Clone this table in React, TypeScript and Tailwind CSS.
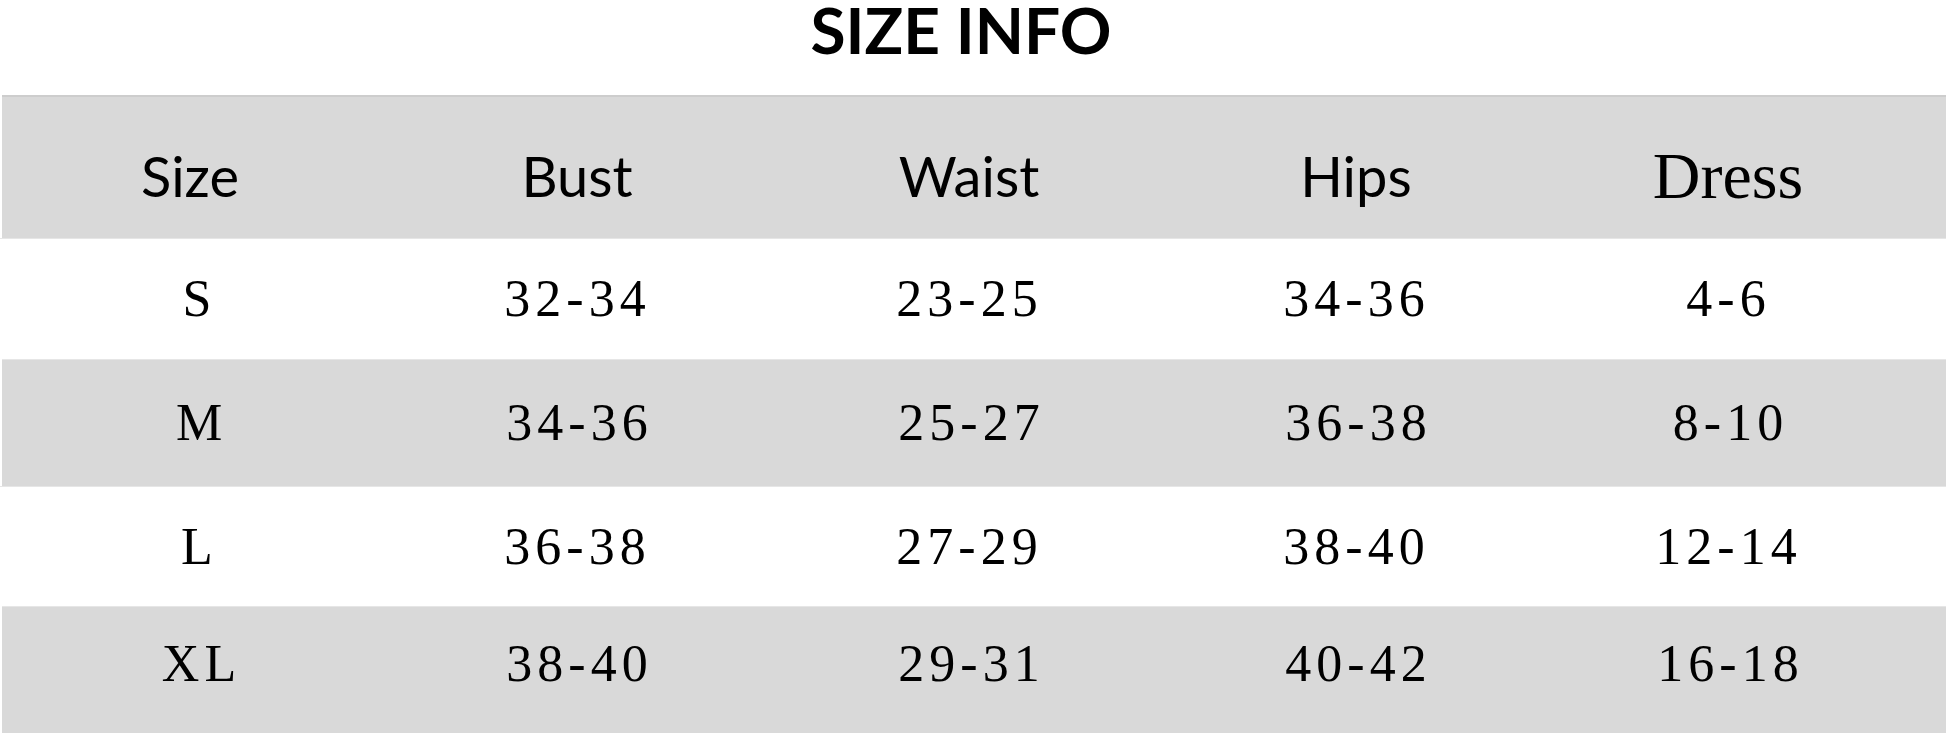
const COLS = "grid grid-cols-[394px_362px_422px_352px_392px]";

const HEADERS = ["Size", "Bust", "Waist", "Hips", "Dress"];

const ROWS: { cells: string[]; shaded: boolean; height: string }[] = [
  { cells: ["S", "32-34", "23-25", "34-36", "4-6"], shaded: false, height: "h-[121px]" },
  { cells: ["M", "34-36", "25-27", "36-38", "8-10"], shaded: true, height: "h-[127px]" },
  { cells: ["L", "36-38", "27-29", "38-40", "12-14"], shaded: false, height: "h-[120px]" },
  { cells: ["XL", "38-40", "29-31", "40-42", "16-18"], shaded: true, height: "h-[127px]" },
];

export default function App() {
  return (
    <div className="w-[1946px] h-[733px] overflow-hidden bg-white text-black">
      {/* タイトル */}
      <div className="h-[95px] pr-6 pt-[2px] text-center font-['Lato',sans-serif] font-bold text-[64px] leading-[56px]">
        SIZE INFO
      </div>

      {/* ヘッダー行 */}
      <div
        className={`${COLS} h-[143px] ml-[2px] bg-[#d9d9d9] border-t-2 border-[#cdcdcd] items-center pt-4`}
      >
        {HEADERS.map((h, i) => (
          <div
            key={h}
            className={`text-center ${
              i === 4
                ? "font-['Liberation_Serif',serif] text-[66px]"
                : "font-['Lato',sans-serif] text-[56px]"
            } ${i === 0 ? "pr-[18px]" : ""} leading-none`}
          >
            {h}
          </div>
        ))}
      </div>

      {/* データ行 */}
      {ROWS.map((row) => (
        <div
          key={row.cells[0]}
          className={`${COLS} ${row.height} items-center border-t border-[#e6e6e6] ${
            row.shaded ? "bg-[#d9d9d9] ml-[2px]" : "bg-white"
          } ${row.cells[0] === "XL" ? "pb-3" : ""}`}
        >
          {row.cells.map((c, i) => (
            <div
              key={i}
              className="text-center font-['Liberation_Serif',serif] text-[52px] leading-none tracking-[5px] pl-[5px]"
            >
              {c}
            </div>
          ))}
        </div>
      ))}
    </div>
  );
}
